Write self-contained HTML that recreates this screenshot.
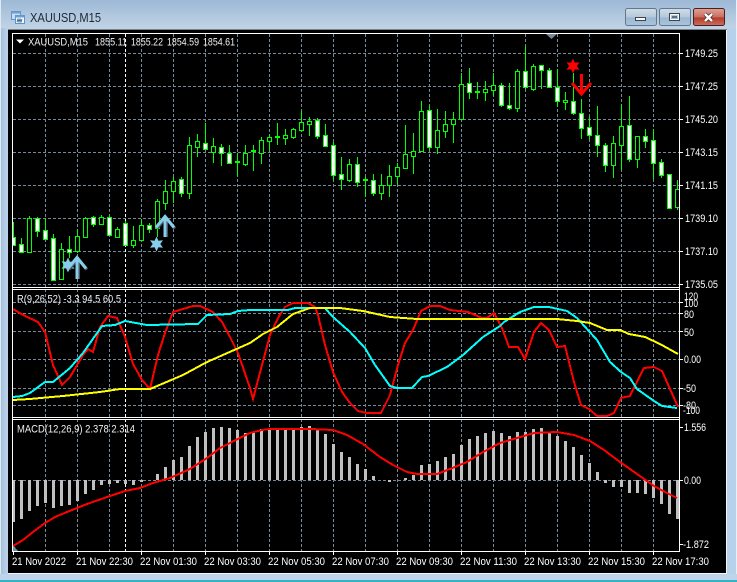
<!DOCTYPE html>
<html><head><meta charset="utf-8"><title>XAUUSD,M15</title>
<style>
html,body{margin:0;padding:0;background:#fff}
#w{position:relative;width:737px;height:582px;overflow:hidden;background:#b9d1ea}
svg{position:absolute;left:0;top:0}
text{font-family:"Liberation Sans",sans-serif;font-size:11px;fill:#fff}
.l{fill:#f0f0f0}
</style></head><body><div id="w">
<svg width="737" height="582" viewBox="0 0 737 582" xmlns="http://www.w3.org/2000/svg">
<defs>
<linearGradient id="tb" x1="0" y1="0" x2="0" y2="1"><stop offset="0" stop-color="#9db9d6"/><stop offset="1" stop-color="#c3d5e6"/></linearGradient>
<linearGradient id="lf" x1="0" y1="0" x2="1" y2="0"><stop offset="0" stop-color="#a3bedb"/><stop offset="1" stop-color="#c0d6ec"/></linearGradient>
<linearGradient id="bt" x1="0" y1="0" x2="0" y2="1"><stop offset="0" stop-color="#d0dde9"/><stop offset=".5" stop-color="#b5c8da"/><stop offset=".55" stop-color="#9db7d0"/><stop offset="1" stop-color="#a9c4de"/></linearGradient>
<linearGradient id="cl" x1="0" y1="0" x2="0" y2="1"><stop offset="0" stop-color="#dfa396"/><stop offset=".5" stop-color="#c96f5f"/><stop offset=".55" stop-color="#b43c2c"/><stop offset="1" stop-color="#c9705e"/></linearGradient>
<clipPath id="cp"><rect x="13" y="34" width="666" height="517"/></clipPath>
</defs>
<!-- frame -->
<rect width="737" height="30" fill="url(#tb)"/>
<rect x="0" y="28" width="9" height="554" fill="url(#lf)"/>
<rect x="0" y="0" width="1" height="582" fill="#dfe9f3"/>
<rect x="727" y="28" width="10" height="554" fill="#b7d1ea"/>
<rect x="736" y="0" width="1" height="582" fill="#e6f0f8"/>
<rect x="0" y="574" width="737" height="6" fill="#bdd4ea"/>
<rect x="0" y="580" width="737" height="2" fill="#2fb4c8"/>
<rect x="8" y="29" width="719" height="1" fill="#76838f"/>
<rect x="8" y="30" width="718" height="543" fill="#000"/>
<rect x="726" y="30" width="1" height="544" fill="#f2f6fa"/>
<rect x="8" y="573" width="719" height="1" fill="#f2f6fa"/>
<!-- app icon -->
<g>
<rect x="11.5" y="11.5" width="9" height="8" fill="#c8dcf2" stroke="#5f93c9"/>
<rect x="11.5" y="11.5" width="9" height="2" fill="#6a9fd6"/>
<rect x="15.5" y="15.5" width="9" height="8" fill="#f4f8fc" stroke="#5f93c9"/>
<rect x="15.5" y="15.5" width="9" height="2" fill="#6a9fd6"/>
<path d="M17 22l1-3 1 3 1-3 1 3 1-3" fill="none" stroke="#27567f" stroke-width=".8"/>
</g>
<text x="30" y="22" style="font-size:13px;fill:#1d2a36" textLength="71" lengthAdjust="spacingAndGlyphs">XAUUSD,M15</text>
<!-- buttons -->
<rect x="625.5" y="8.5" width="31" height="17" rx="2" fill="url(#bt)" stroke="#64788d"/>
<rect x="635.5" y="17.5" width="10" height="3" fill="#f4f6f8" stroke="#3c4650"/>
<rect x="659.5" y="8.5" width="31" height="17" rx="2" fill="url(#bt)" stroke="#64788d"/>
<rect x="669.5" y="13.5" width="10" height="7" fill="none" stroke="#3c4650"/>
<rect x="670.5" y="14.5" width="8" height="5" fill="none" stroke="#f4f6f8"/>
<rect x="672" y="16" width="5" height="2" fill="#5b6f82"/>
<rect x="693.5" y="8.5" width="31" height="17" rx="2" fill="url(#cl)" stroke="#4f1f1f"/>
<path d="M705 14l3.5 3.5L712 14M705 21l3.5-3.5L712 21" fill="none" stroke="#4a2a28" stroke-width="4"/>
<path d="M705 14l3.5 3.5L712 14M705 21l3.5-3.5L712 21" fill="none" stroke="#fff" stroke-width="2.4"/>

<g clip-path="url(#cp)" shape-rendering="crispEdges">
<!-- grid -->
<path d="M45.5 34V551M77.5 34V551M109.5 34V551M141.5 34V551M173.5 34V551M205.5 34V551M237.5 34V551M269.5 34V551M301.5 34V551M333.5 34V551M365.5 34V551M397.5 34V551M429.5 34V551M461.5 34V551M493.5 34V551M525.5 34V551M557.5 34V551M589.5 34V551M621.5 34V551M653.5 34V551" stroke="#778899" stroke-dasharray="3 2" fill="none"/>
<path d="M13 53.5H679M13 86.5H679M13 119.5H679M13 152.5H679M13 185.5H679M13 218.5H679M13 251.5H679M13 284.5H679M13 302.5H679M13 313.5H679M13 331.5H679M13 359.5H679M13 388.5H679M13 405.5H679M13 480.5H679" stroke="#778899" stroke-dasharray="3 2" fill="none"/>
<path d="M125.5 34V551" stroke="#fff" stroke-dasharray="3 2" fill="none"/>
<!-- wicks -->
<path fill="none" stroke="#00ff00" d="M13.5 222V245M21.5 238V253M29.5 216V252M37.5 217V237M45.5 218V240M53.5 234V281M61.5 243V280M69.5 236V258M77.5 229V253M85.5 217V237M93.5 216V227M101.5 215V225M109.5 216V236M117.5 227V237M125.5 221V246M133.5 226V248M141.5 219V241M149.5 223V233M157.5 199V237M165.5 180V210M173.5 177V203M181.5 177V197M189.5 137V199M197.5 134V157M205.5 123V150M213.5 138V163M221.5 144V166M229.5 145V163M237.5 153V176M245.5 145V166M253.5 145V171M261.5 137V164M269.5 135V151M277.5 123V145M285.5 129V145M293.5 128V139M301.5 111V132M309.5 117V136M317.5 118V139M325.5 124V147M333.5 142V180M341.5 157V190M349.5 159V182M357.5 157V187M365.5 177V197M373.5 174V196M381.5 174V200M389.5 165V197M397.5 163V185M405.5 125V169M413.5 133V174M421.5 101V151M429.5 105V151M437.5 109V154M445.5 111V138M453.5 112V143M461.5 73V119M469.5 68V99M477.5 82V99M485.5 81V101M493.5 73V96M501.5 83V107M509.5 83V110M517.5 69V112M525.5 46V89M533.5 64V91M541.5 65V89M549.5 68V87M557.5 69V107M565.5 92V110M573.5 73V115M581.5 99V139M589.5 117V139M597.5 106V157M605.5 143V172M613.5 136V178M621.5 104V170M629.5 96V162M637.5 136V168M645.5 129V148M653.5 129V179M661.5 159V178M669.5 174V209M677.5 180V210"/>
<!-- hollow bodies -->
<path fill="#000" stroke="#00ff00" d="M27.5 218.5h4v34h-4zM59.5 249.5h4v30h-4zM75.5 236.5h4v15h-4zM83.5 218.5h4v19h-4zM99.5 217.5h4v7h-4zM115.5 229.5h4v8h-4zM131.5 240.5h4v5h-4zM139.5 225.5h4v15h-4zM155.5 201.5h4v27h-4zM163.5 191.5h4v12h-4zM171.5 181.5h4v10h-4zM187.5 145.5h4v48h-4zM195.5 141.5h4v6h-4zM211.5 146.5h4v6h-4zM243.5 153.5h4v11h-4zM259.5 140.5h4v13h-4zM267.5 137.5h4v4h-4zM283.5 135.5h4v3h-4zM291.5 129.5h4v8h-4zM299.5 122.5h4v8h-4zM307.5 121.5h4v3h-4zM347.5 164.5h4v16h-4zM379.5 185.5h4v8h-4zM387.5 176.5h4v9h-4zM395.5 167.5h4v9h-4zM403.5 154.5h4v14h-4zM411.5 151.5h4v5h-4zM419.5 111.5h4v40h-4zM435.5 130.5h4v17h-4zM443.5 124.5h4v7h-4zM451.5 119.5h4v5h-4zM459.5 84.5h4v35h-4zM483.5 89.5h4v3h-4zM491.5 85.5h4v5h-4zM515.5 71.5h4v37h-4zM531.5 66.5h4v23h-4zM563.5 100.5h4v2h-4zM611.5 143.5h4v22h-4zM619.5 126.5h4v19h-4zM635.5 136.5h4v23h-4zM675.5 189.5h4v18h-4z"/>
<!-- doji -->
<path fill="none" stroke="#00ff00" stroke-width="2" d="M235 162h5M251 151h5M275 137h5M363 180h5M475 92h5"/>
<!-- white bodies -->
<path fill="#fff" stroke="#00ff00" d="M11.5 237.5h4v8h-4zM19.5 244.5h4v8h-4zM35.5 218.5h4v13h-4zM43.5 230.5h4v9h-4zM51.5 238.5h4v42h-4zM67.5 249.5h4v3h-4zM91.5 217.5h4v7h-4zM107.5 217.5h4v18h-4zM123.5 223.5h4v22h-4zM147.5 225.5h4v4h-4zM179.5 179.5h4v14h-4zM203.5 143.5h4v6h-4zM219.5 147.5h4v6h-4zM227.5 153.5h4v10h-4zM315.5 120.5h4v16h-4zM323.5 135.5h4v11h-4zM331.5 145.5h4v30h-4zM339.5 174.5h4v5h-4zM355.5 164.5h4v18h-4zM371.5 180.5h4v13h-4zM427.5 110.5h4v37h-4zM467.5 83.5h4v9h-4zM499.5 85.5h4v20h-4zM507.5 105.5h4v3h-4zM523.5 71.5h4v16h-4zM539.5 65.5h4v5h-4zM547.5 70.5h4v17h-4zM555.5 87.5h4v14h-4zM571.5 101.5h4v12h-4zM579.5 113.5h4v15h-4zM587.5 127.5h4v8h-4zM595.5 135.5h4v10h-4zM603.5 145.5h4v20h-4zM627.5 125.5h4v34h-4zM643.5 136.5h4v5h-4zM651.5 140.5h4v23h-4zM659.5 162.5h4v13h-4zM667.5 174.5h4v34h-4z"/>
<!-- RSI -->
<polyline fill="none" stroke="#ff0000" stroke-width="2" points="13,309 23,315 38,322 45,332 53,365 62,385 70,377 83,355 88,349 93,352 100,327 108,316 117,318 125,337 133,364 142,380 150,389 158,355 165,333 173,312 183,309 193,306 200,306 213,312 222,322 230,337 238,353 250,388 253,399 262,365 270,335 278,318 285,307 293,303 308,303 315,307 318,315 325,345 333,372 342,392 350,403 358,411 367,413 381,413 390,395 398,365 405,343 413,330 421,311 430,306 440,306 450,310 468,312 482,318 487,318 494,313 502,328 509,347 518,347 525,359 534,332 541,323 549,330 557,347 565,346 574,382 581,405 589,409 597,416 607,416 614,413 621,398 630,396 644,368 654,367 662,371 678,407"/>
<polyline fill="none" stroke="#00ffff" stroke-width="2" points="13,397 22,396 30,393 45,382 53,382 70,368 83,353 102,326 115,325 125,321 147,325 198,324 207,315 230,314 238,311 250,310 288,310 295,308 325,308 333,317 350,332 365,348 375,365 390,386 397,388 412,388 422,377 428,376 447,367 463,355 483,337 500,326 504,322 520,312 534,307 549,307 567,311 577,318 597,340 610,362 621,372 630,378 637,389 654,401 662,406 677,408"/>
<polyline fill="none" stroke="#ffff00" stroke-width="2" points="13,400 30,399 63,396 100,392 120,389 150,389 183,375 207,362 250,343 263,334 277,327 293,314 310,308 340,308 363,311 390,317 417,319 557,319 577,321 590,323 607,330 620,330 629,334 645,337 660,344 678,354"/>
<!-- MACD hist -->
<path fill="none" stroke="#c0c0c0" stroke-width="3" d="M13.5 480V522M21.5 480V519M29.5 480V511M37.5 480V506M45.5 480V503M53.5 480V508M61.5 480V506M69.5 480V505M77.5 480V501M85.5 480V494M93.5 480V490M101.5 480V485M109.5 480V484M117.5 480V483M125.5 480V484M133.5 480V485M141.5 480V482M157.5 480V474M165.5 480V467M173.5 480V460M181.5 480V457M189.5 480V446M197.5 480V437M205.5 480V432M213.5 480V428M221.5 480V427M229.5 480V428M237.5 480V430M245.5 480V433M253.5 480V432M261.5 480V429M269.5 480V428M277.5 480V429M285.5 480V429M293.5 480V429M301.5 480V427M309.5 480V426M317.5 480V429M325.5 480V434M333.5 480V444M341.5 480V452M349.5 480V457M357.5 480V464M365.5 480V469M373.5 480V476M389.5 480V482M405.5 480V478M413.5 480V475M421.5 480V465M429.5 480V464M437.5 480V461M445.5 480V457M453.5 480V454M461.5 480V445M469.5 480V439M477.5 480V436M485.5 480V433M493.5 480V431M501.5 480V433M509.5 480V436M517.5 480V432M525.5 480V432M533.5 480V429M541.5 480V428M549.5 480V432M557.5 480V436M565.5 480V441M573.5 480V447M581.5 480V455M589.5 480V463M597.5 480V472M605.5 480V483M613.5 480V487M621.5 480V487M629.5 480V493M637.5 480V493M645.5 480V494M653.5 480V498M661.5 480V504M669.5 480V514M677.5 480V519"/>
<polyline fill="none" stroke="#ff0000" stroke-width="2" points="13,546 23,540 33,532 45,523 55,517 67,512 87,504 110,496 125,491 140,488 153,483 170,478 190,469 207,458 220,448 230,443 250,433 262,430 270,429 310,429 333,430 347,435 363,444 380,457 393,465 407,472 417,474 437,474 450,469 467,462 483,452 487,450 500,443 517,438 534,433 557,432 574,435 590,441 604,450 620,462 637,474 654,486 665,492 677,498"/>
<path d="M13 545l5 6h-5z" fill="#778899"/>
</g>
<!-- signals blue -->
<g clip-path="url(#cp)">
<path transform="translate(68 265)" d="M0-7.5L1.9-3.3 6.5-3.75 3.8 0 6.5 3.75 1.9 3.3 0 7.5-1.9 3.3-6.5 3.75-3.8 0-6.5-3.75-1.9-3.3Z" fill="#87ceeb"/>
<path transform="translate(156.500 244)" d="M0-7.5L1.9-3.3 6.5-3.75 3.8 0 6.5 3.75 1.9 3.3 0 7.5-1.9 3.3-6.5 3.75-3.8 0-6.5-3.75-1.9-3.3Z" fill="#87ceeb"/>
<path d="M69 269.500l9-11 9 11M78.500 259V279" fill="none" stroke="#4a5560" stroke-width="3"/>
<path d="M68 268.500l9-11 9 11M77 258V279" fill="none" stroke="#87ceeb" stroke-width="3"/>
<path d="M157 228.500l9-11 9 11M166.500 218V237" fill="none" stroke="#4a5560" stroke-width="3"/>
<path d="M156 227.500l9-11 9 11M165 217V237" fill="none" stroke="#87ceeb" stroke-width="3"/>
<!-- signals red -->
<path transform="translate(573 66)" d="M0-7.5L1.9-3.3 6.5-3.75 3.8 0 6.5 3.75 1.9 3.3 0 7.5-1.9 3.3-6.5 3.75-3.8 0-6.5-3.75-1.9-3.3Z" fill="#ff0000"/>
<path d="M581.500 74V93M572 83l9.500 11 9.500-11" fill="none" stroke="#ff0000" stroke-width="3"/>
</g>
<!-- pane separators -->
<rect x="13" y="288" width="667" height="1" fill="#000"/>
<rect x="13" y="418" width="667" height="1" fill="#000"/>
<path d="M12.5 33.500H679.500V551.500H12.500ZM12.500 287.500H679.500M12.500 289.500H679.500M12.500 417.500H679.500M12.500 419.500H679.500" fill="none" stroke="#fff"/>
<path d="M546 34h11l-5.500 5z" fill="#778899"/>
<!-- right ticks -->
<path stroke="#fff" fill="none" d="M680 53.500h3M680 86.500h3M680 119.500h3M680 152.500h3M680 185.500h3M680 218.500h3M680 251.500h3M680 284.500h3M680 302.500h3M680 313.500h3M680 331.500h3M680 359.500h3M680 388.500h3M680 405.500h3M680 427.500h3M680 480.500h3M680 544.500h3"/>
<!-- bottom ticks -->
<path stroke="#fff" fill="none" d="M13.500 552v3M77.500 552v3M141.500 552v3M205.500 552v3M269.500 552v3M333.500 552v3M397.500 552v3M461.500 552v3M525.500 552v3M589.500 552v3M653.500 552v3"/>
<!-- legends -->
<path d="M16 39.500h8l-4 4z" fill="#fff"/>
<text x="28" y="45.500" textLength="60" lengthAdjust="spacingAndGlyphs" class="l">XAUUSD,M15</text>
<text x="95" y="45.500" textLength="32" lengthAdjust="spacingAndGlyphs" class="l">1855.11</text>
<text x="131" y="45.500" textLength="32" lengthAdjust="spacingAndGlyphs" class="l">1855.22</text>
<text x="167" y="45.500" textLength="32" lengthAdjust="spacingAndGlyphs" class="l">1854.59</text>
<text x="203" y="45.500" textLength="32" lengthAdjust="spacingAndGlyphs" class="l">1854.61</text>
<text x="17" y="302.500" textLength="104" lengthAdjust="spacingAndGlyphs" class="l">R(9,26,52) -3.3 94.5 60.5</text>
<text x="17" y="432.500" textLength="118" lengthAdjust="spacingAndGlyphs" class="l">MACD(12,26,9) 2.378 2.314</text>
<!-- price labels -->
<text x="685" y="57" textLength="33" lengthAdjust="spacingAndGlyphs">1749.25</text>
<text x="685" y="90" textLength="33" lengthAdjust="spacingAndGlyphs">1747.25</text>
<text x="685" y="123" textLength="33" lengthAdjust="spacingAndGlyphs">1745.20</text>
<text x="685" y="156" textLength="33" lengthAdjust="spacingAndGlyphs">1743.15</text>
<text x="685" y="189" textLength="33" lengthAdjust="spacingAndGlyphs">1741.15</text>
<text x="685" y="222" textLength="33" lengthAdjust="spacingAndGlyphs">1739.10</text>
<text x="685" y="255" textLength="33" lengthAdjust="spacingAndGlyphs">1737.10</text>
<text x="685" y="288" textLength="33" lengthAdjust="spacingAndGlyphs">1735.05</text>
<text x="684" y="300" textLength="14" lengthAdjust="spacingAndGlyphs">120</text>
<text x="684" y="307" textLength="14" lengthAdjust="spacingAndGlyphs">100</text>
<text x="684" y="318" textLength="10" lengthAdjust="spacingAndGlyphs">80</text>
<text x="684" y="336" textLength="10" lengthAdjust="spacingAndGlyphs">50</text>
<text x="684" y="363" textLength="17" lengthAdjust="spacingAndGlyphs">0.00</text>
<text x="683" y="392" textLength="13" lengthAdjust="spacingAndGlyphs">-50</text>
<text x="683" y="409" textLength="13" lengthAdjust="spacingAndGlyphs">-80</text>
<text x="683" y="414" textLength="17" lengthAdjust="spacingAndGlyphs">-100</text>
<text x="684" y="431" textLength="22" lengthAdjust="spacingAndGlyphs">1.556</text>
<text x="684" y="484" textLength="17" lengthAdjust="spacingAndGlyphs">0.00</text>
<text x="683" y="548" textLength="26" lengthAdjust="spacingAndGlyphs">-1.872</text>
<!-- time labels -->
<text x="12" y="565" textLength="54" lengthAdjust="spacingAndGlyphs">21 Nov 2022</text>
<text x="76" y="565" textLength="57" lengthAdjust="spacingAndGlyphs">21 Nov 22:30</text>
<text x="140" y="565" textLength="57" lengthAdjust="spacingAndGlyphs">22 Nov 01:30</text>
<text x="204" y="565" textLength="57" lengthAdjust="spacingAndGlyphs">22 Nov 03:30</text>
<text x="268" y="565" textLength="57" lengthAdjust="spacingAndGlyphs">22 Nov 05:30</text>
<text x="332" y="565" textLength="57" lengthAdjust="spacingAndGlyphs">22 Nov 07:30</text>
<text x="396" y="565" textLength="57" lengthAdjust="spacingAndGlyphs">22 Nov 09:30</text>
<text x="460" y="565" textLength="57" lengthAdjust="spacingAndGlyphs">22 Nov 11:30</text>
<text x="524" y="565" textLength="57" lengthAdjust="spacingAndGlyphs">22 Nov 13:30</text>
<text x="588" y="565" textLength="57" lengthAdjust="spacingAndGlyphs">22 Nov 15:30</text>
<text x="652" y="565" textLength="57" lengthAdjust="spacingAndGlyphs">22 Nov 17:30</text>
</svg>
</div></body></html>
